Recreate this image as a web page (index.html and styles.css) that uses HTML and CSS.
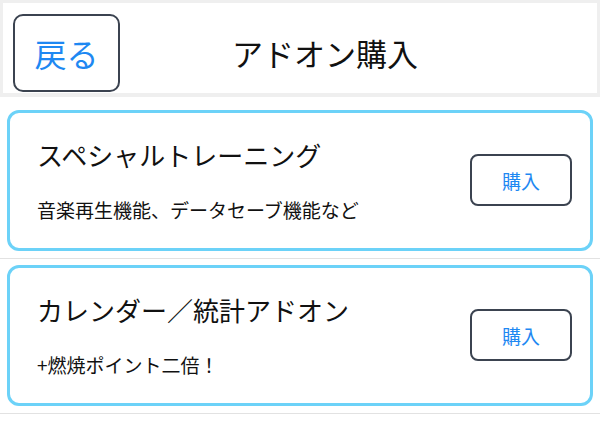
FILE: index.html
```html
<!DOCTYPE html>
<html lang="ja">
<head>
<meta charset="utf-8">
<link rel="stylesheet" href="styles.css">
</head>
<body>
<header class="header">
  <button class="back-btn">戻る</button>
  <h1 class="title">アドオン購入</h1>
</header>
<main class="list">
  <section class="row row-first">
    <div class="card">
      <div class="card-text">
        <div class="card-title">スペシャルトレーニング</div>
        <div class="card-sub">音楽再生機能、データセーブ機能など</div>
      </div>
      <button class="buy-btn">購入</button>
    </div>
  </section>
  <section class="row">
    <div class="card">
      <div class="card-text">
        <div class="card-title">カレンダー／統計アドオン</div>
        <div class="card-sub">+燃焼ポイント二倍！</div>
      </div>
      <button class="buy-btn">購入</button>
    </div>
  </section>
</main>
</body>
</html>
```
FILE: styles.css
```css
* { box-sizing: border-box; }
html, body {
  margin: 0;
  padding: 0;
  background: #efefef;
  font-family: "Noto Sans CJK JP", "Noto Sans", sans-serif;
  color: #111;
  height: 421px;
  overflow: hidden;
}
.header {
  margin: 3px 3px 0;
  height: 90px;
  background: #fff;
  display: flex;
  align-items: flex-start;
  padding: 11px 0 0 10px;
}
.back-btn {
  width: 107px;
  height: 78px;
  border: 2px solid #3b4350;
  border-radius: 10px;
  background: #fff;
  color: #1e88f2;
  font-family: inherit;
  font-size: 32px;
  line-height: 74px;
  padding: 0;
  text-align: center;
}
.title {
  margin: 0 0 0 112px;
  font-size: 31px;
  font-weight: 400;
  line-height: 78px;
  color: #111;
}
.list {
  margin-top: 4px;
  background: #fff;
  height: 330px;
}
.row {
  padding: 6px 7px 7px;
  border-bottom: 1px solid #e2e2e2;
}
.row-first { padding-top: 13px; }
.card {
  border: 3px solid #6cd2f8;
  border-radius: 12px;
  padding: 26px 18px 27px 27px;
  display: flex;
  align-items: center;
  justify-content: space-between;
}
.card-title {
  font-size: 26px;
  line-height: 31px;
}
.card-sub {
  margin-top: 28px;
  font-size: 19px;
  line-height: 23px;
}
.buy-btn {
  width: 102px;
  height: 52px;
  border: 2px solid #3b4350;
  border-radius: 8px;
  background: #fff;
  color: #1e88f2;
  font-family: inherit;
  font-size: 19px;
  padding: 0;
}
```
